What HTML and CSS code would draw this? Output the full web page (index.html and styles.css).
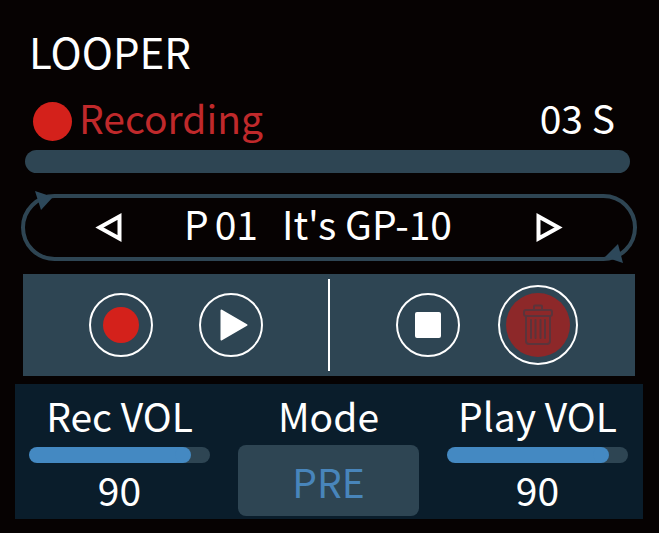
FILE: index.html
```
<!DOCTYPE html>
<html lang="en">
<head>
  <meta charset="UTF-8">
  <meta name="viewport" content="width=device-width, initial-scale=1.0">
  <title>Looper</title>
  <link rel="stylesheet" href="styles.css">
</head>
<body>
  <main class="looper">
    <h1>LOOPER</h1>

    <div class="status">
      <span class="status-dot"></span>
      <span class="status-text">Recording</span>
      <span class="status-time">03 S</span>
    </div>
    <div class="timeline"></div>

    <div class="patch">
      <svg class="arrow arrow-start" viewBox="0 0 18 19" width="18" height="19"><path d="M0 0L18 6L6 19Z"/></svg>
      <button type="button" class="patch-nav" aria-label="Previous patch">
        <svg viewBox="0 0 28 30" width="28" height="30"><path d="M24.5 3.5V25.5L4.5 14.5Z"/></svg>
      </button>
      <div class="patch-name">
        <span class="bank">P</span>
        <span class="number">01</span>
        <span>It's GP-10</span>
      </div>
      <button type="button" class="patch-nav" aria-label="Next patch">
        <svg viewBox="0 0 28 30" width="28" height="30"><path d="M3.5 3.5V25.5L23.5 14.5Z"/></svg>
      </button>
      <svg class="arrow arrow-end" viewBox="0 0 18 19" width="18" height="19"><path d="M18 19L0 13L13 0Z"/></svg>
    </div>

    <div class="transport">
      <div class="group">
        <button type="button" class="round" aria-label="Record">
          <svg viewBox="0 0 60 60" width="60" height="60"><circle class="red" cx="30" cy="30" r="18"/></svg>
        </button>
        <button type="button" class="round" aria-label="Play">
          <svg viewBox="0 0 60 60" width="60" height="60"><path class="white" d="M20.5 15.5L45.5 30L20.5 44.5Z"/></svg>
        </button>
      </div>
      <div class="group">
        <button type="button" class="round" aria-label="Stop">
          <svg viewBox="0 0 60 60" width="60" height="60"><rect class="white" x="18" y="18" width="24" height="24" rx="1"/></svg>
        </button>
        <button type="button" class="round delete" aria-label="Delete">
          <svg viewBox="0 0 76 76" width="76" height="76">
            <circle class="dark-red" cx="38" cy="38" r="32"/>
            <g class="bin">
              <path d="M34 22V19.5Q34 18.5 35 18.5H41Q42 18.5 42 19.5V22"/>
              <rect x="24" y="23" width="28" height="6" rx="2"/>
              <path d="M26 30V54Q26 57 29 57H47Q50 57 50 54V30"/>
              <path d="M31 33V51M35.5 33V51M40.5 33V51M45 33V51"/>
            </g>
          </svg>
        </button>
      </div>
    </div>

    <div class="settings">
      <div class="setting">
        <label for="recVol">Rec VOL</label>
        <input type="range" id="recVol" min="0" max="100" value="90" style="--level: 90%">
        <output for="recVol">90</output>
      </div>
      <div class="setting">
        <label for="mode">Mode</label>
        <button type="button" id="mode" class="mode">PRE</button>
      </div>
      <div class="setting">
        <label for="playVol">Play VOL</label>
        <input type="range" id="playVol" min="0" max="100" value="90" style="--level: 90%">
        <output for="playVol">90</output>
      </div>
    </div>
  </main>

  <script>
    document.querySelectorAll("input[type=range]").forEach((slider) => {
      slider.addEventListener("input", () => {
        slider.style.setProperty("--level", slider.value + "%");
        slider.nextElementSibling.value = slider.value;
      });
    });
  </script>
</body>
</html>
```
FILE: styles.css
```
* {
  box-sizing: border-box;
}
body {
  margin: 0;
  background-color: #060202;
  color: #fff;
  font-family: "Noto Sans CJK SC", "Noto Sans", sans-serif;
  font-size: 39px;
  line-height: 60px;
}
button {
  padding: 0;
  border: none;
  background: none;
  color: inherit;
  font: inherit;
  cursor: pointer;
}
svg {
  display: block;
}
.looper {
  padding: 21px 16px 15px 15px;
}
h1 {
  margin: 0 0 0 14px;
  font-size: 42px;
  font-weight: normal;
  line-height: 60px;
}
.status {
  display: flex;
  align-items: center;
  padding: 6px 28px 3px 18px;
}
.status-dot {
  width: 39px;
  height: 39px;
  margin: 8px 7px 0 0;
  border-radius: 50%;
  background-color: #d4211b;
}
.status-text {
  color: #c0292b;
}
.status-time {
  margin-left: auto;
}
.timeline {
  height: 23px;
  margin: 0 13px 21px 10px;
  border-radius: 12px;
  background-color: #2e4553;
}
.patch {
  position: relative;
  display: flex;
  align-items: center;
  justify-content: space-between;
  height: 67px;
  margin: 0 6px 13px 6px;
  padding: 0 70px;
  border: 4px solid #2e4553;
  border-radius: 34px;
}
.patch-nav path {
  fill: none;
  stroke: #fff;
  stroke-width: 4;
}
.patch-name {
  display: flex;
  margin: 0 22px 10px 0;
}
.bank {
  margin-right: 6px;
}
.number {
  margin-right: 24px;
}
.arrow {
  position: absolute;
  fill: #2d485a;
}
.arrow-start {
  top: -7px;
  left: 10px;
}
.arrow-end {
  right: 10px;
  bottom: -6px;
}
.transport {
  display: flex;
  height: 102px;
  margin: 0 8px;
  margin-bottom: 8px;
  padding: 5px 0;
  background-color: #2e4553;
}
.group {
  display: flex;
  flex: 1;
  align-items: center;
  justify-content: center;
  gap: 46px;
}
.group + .group {
  border-left: 2px solid #fff;
}
.round {
  border: 2px solid #fff;
  border-radius: 50%;
}
.delete {
  margin: -8px;
}
.red {
  fill: #d4211b;
}
.dark-red {
  fill: #8d2829;
}
.white {
  fill: #fff;
  stroke: #fff;
  stroke-width: 2;
  stroke-linejoin: round;
}
.bin {
  fill: none;
  stroke: #5b343b;
  stroke-width: 2;
  stroke-linecap: round;
}
.settings {
  display: grid;
  grid-template-columns: repeat(3, 1fr);
  gap: 28px;
  padding: 1px 15px 3px 14px;
  background-color: #0a1d2b;
}
.setting {
  display: flex;
  flex-direction: column;
  align-items: center;
}
.setting label {
  line-height: 60px;
}
input[type=range] {
  appearance: none;
  width: 100%;
  height: 16px;
  margin: 2px 0 0;
  padding: 0 3px 0 0;
  overflow: hidden;
  border-radius: 8px;
  background: #2e4553 linear-gradient(#4489c2, #4489c2) no-repeat;
  background-size: calc(var(--level) - 9px) 100%;
}
input[type=range]::-webkit-slider-thumb {
  appearance: none;
  width: 16px;
  height: 16px;
  border-radius: 50%;
  background-color: #4489c2;
}
output {
  line-height: 52px;
}
.mode {
  width: 100%;
  height: 71px;
  border-radius: 8px;
  background-color: #2e4553;
  color: #4885bb;
}
```
